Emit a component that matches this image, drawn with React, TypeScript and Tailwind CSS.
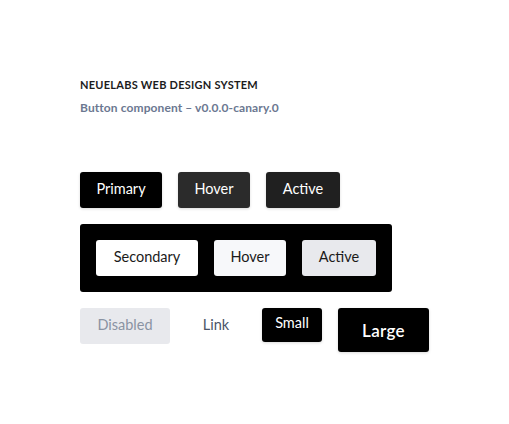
import React from "react";

const base =
  "inline-flex items-center justify-center rounded-[3px] text-[14.5px] leading-none";

export default function App() {
  return (
    <div
      className="w-[509px] h-[424px] bg-white pl-[80px] pt-[79px]"
      style={{ fontFamily: "Lato, 'Open Sans', sans-serif" }}
    >
      <div className="text-[11px] font-bold tracking-[0.25px] text-[#1c1c1c] leading-[12px]">
        NEUELABS WEB DESIGN SYSTEM
      </div>
      <div className="mt-[10px] text-[12px] font-bold tracking-[0.1px] text-[#6b7891] leading-[14px]">
        Button component – v0.0.0-canary.0
      </div>

      <div className="mt-[57px] flex gap-[16px]">
        <button className={`${base} h-[36px] w-[82px] pb-[1px] bg-black text-white shadow-[0_1px_3px_rgba(0,0,0,0.15)]`}>
          Primary
        </button>
        <button className={`${base} h-[36px] w-[72px] pb-[1px] bg-[#2b2b2b] text-white shadow-[0_1px_3px_rgba(0,0,0,0.15)]`}>
          Hover
        </button>
        <button className={`${base} h-[36px] w-[74px] pb-[1px] bg-[#202020] text-white shadow-[0_1px_3px_rgba(0,0,0,0.15)]`}>
          Active
        </button>
      </div>

      <div className="mt-[16px] w-[312px] h-[68px] bg-black rounded-[3px] p-[16px] flex gap-[16px]">
        <button className={`${base} h-[36px] w-[102px] pb-[1px] bg-white text-[#1a1a1a]`}>
          Secondary
        </button>
        <button className={`${base} h-[36px] w-[72px] pb-[1px] bg-[#f7f8fa] text-[#1a1a1a]`}>
          Hover
        </button>
        <button className={`${base} h-[36px] w-[74px] pb-[1px] bg-[#e8e9ed] text-[#1a1a1a]`}>
          Active
        </button>
      </div>

      <div className="mt-[16px] flex items-start gap-[16px]">
        <button className={`${base} h-[36px] w-[90px] pb-[1px] bg-[#e8e9ed] text-[#8a93a3]`}>
          Disabled
        </button>
        <button className={`${base} h-[36px] w-[60px] pb-[1px] text-[#4a5568]`}>
          Link
        </button>
        <button className={`${base} h-[34px] w-[60px] pb-[3px] bg-black text-white shadow-[0_1px_3px_rgba(0,0,0,0.15)]`}>
          Small
        </button>
        <button className={`${base} h-[44px] w-[91px] bg-black text-white text-[17px] font-semibold tracking-[0.3px] shadow-[0_1px_3px_rgba(0,0,0,0.15)]`}>
          Large
        </button>
      </div>
    </div>
  );
}
